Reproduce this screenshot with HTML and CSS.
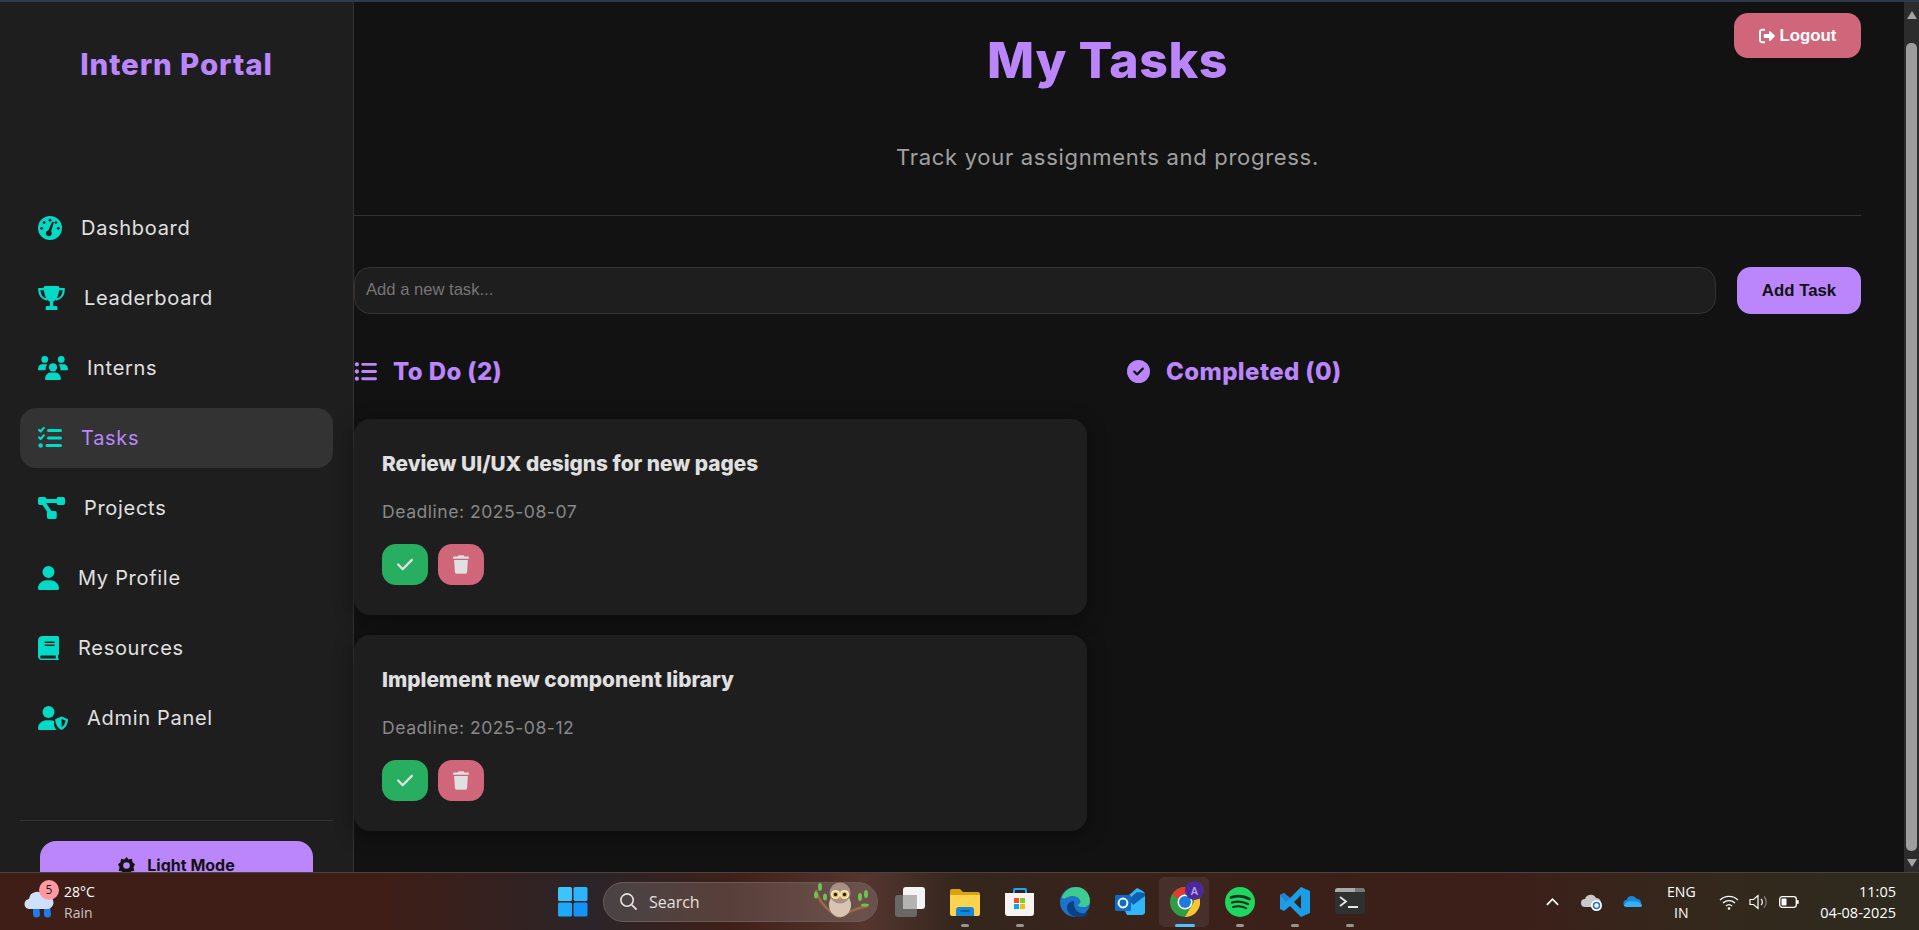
FILE: index.html
```html
<!DOCTYPE html>
<html lang="en">
<head>
    <meta charset="UTF-8">
    <meta name="viewport" content="width=device-width, initial-scale=1.0">
    <title>My Tasks - Intern Portal</title>
    <link rel="stylesheet" href="styles.css">
</head>
<body>
    <div class="top-strip"></div>

    <div class="app">
        <aside class="sidebar">
            <h2 class="brand">Intern Portal</h2>

            <nav class="nav">
                <a href="#" class="nav-item">
                    <svg class="ico w24" viewBox="0 0 512 512"><circle cx="256" cy="256" r="256" fill="currentColor"/><g fill="#1e1e1e"><circle cx="256" cy="88" r="30"/><circle cx="130" cy="140" r="30"/><circle cx="78" cy="262" r="30"/><circle cx="434" cy="262" r="30"/><circle cx="382" cy="140" r="30"/><circle cx="230" cy="370" r="62"/><path d="M206 340 L300 130 Q316 112 330 128 Q340 140 334 156 L266 372 Z"/></g></svg>
                    <span>Dashboard</span>
                </a>
                <a href="#" class="nav-item">
                    <svg class="ico w27" viewBox="0 0 576 512"><path fill="none" stroke="currentColor" stroke-width="48" d="M130 64H28c-6 120 60 210 170 226M446 64h102c6 120-60 210-170 226"/><path fill="currentColor" d="M150 0h276c16 0 28 12 28 30 0 150-60 270-130 306v88h64c14 0 26 12 26 26v62H164v-62c0-14 12-26 26-26h64v-88C184 300 122 180 122 30 122 12 134 0 150 0z"/></svg>
                    <span>Leaderboard</span>
                </a>
                <a href="#" class="nav-item">
                    <svg class="ico w30" viewBox="0 0 640 512"><g fill="currentColor"><circle cx="144" cy="72" r="72"/><circle cx="496" cy="72" r="72"/><circle cx="320" cy="240" r="88"/><path d="M80 176h96c6 0 16 1 22 4-22 26-36 60-36 96 0 10 1 20 3 30H20c-11 0-20-9-20-20 0-60 36-110 80-110zM464 176h96c44 0 80 50 80 110 0 11-9 20-20 20H475c2-10 3-20 3-30 0-36-14-70-36-96 6-3 16-4 22-4zM268 352h104c66 0 116 70 116 136 0 14-10 24-24 24H176c-14 0-24-10-24-24 0-66 50-136 116-136z"/></g></svg>
                    <span>Interns</span>
                </a>
                <a href="#" class="nav-item active">
                    <svg class="ico w24" viewBox="0 0 512 512"><g fill="currentColor"><path fill="none" stroke="currentColor" stroke-width="48" stroke-linecap="round" stroke-linejoin="round" d="M24 84l32 32 66-76M24 244l32 32 66-76"/><circle cx="56" cy="416" r="48"/><rect x="192" y="64" width="320" height="64" rx="32"/><rect x="192" y="224" width="320" height="64" rx="32"/><rect x="160" y="384" width="352" height="64" rx="32"/></g></svg>
                    <span>Tasks</span>
                </a>
                <a href="#" class="nav-item">
                    <svg class="ico w27" viewBox="0 0 576 512"><g fill="currentColor"><path fill="none" stroke="currentColor" stroke-width="84" d="M90 105h400M90 105l190 280"/><rect x="0" y="20" width="180" height="170" rx="40"/><rect x="396" y="20" width="180" height="170" rx="40"/><rect x="190" y="320" width="210" height="170" rx="40"/></g></svg>
                    <span>Projects</span>
                </a>
                <a href="#" class="nav-item">
                    <svg class="ico w21" viewBox="0 0 448 512"><path fill="currentColor" d="M224 256A128 128 0 1 0 224 0a128 128 0 1 0 0 256zm-45.7 48C79.8 304 0 383.8 0 482.3C0 498.7 13.3 512 29.7 512H418.3c16.4 0 29.7-13.3 29.7-29.7C448 383.8 368.2 304 269.7 304H178.3z"/></svg>
                    <span>My Profile</span>
                </a>
                <a href="#" class="nav-item">
                    <svg class="ico w21" viewBox="0 0 448 512"><path fill="currentColor" d="M96 0H416c18 0 32 14 32 32V384c0 14-8 24-20 30v66h4c9 0 16 7 16 16s-7 16-16 16H80c-44 0-80-36-80-80V96C0 43 43 0 96 0zM80 416c-18 0-32 7-32 32s14 32 32 32H380v-64H80z"/><rect x="144" y="118" width="210" height="32" fill="#1e1e1e"/><rect x="144" y="182" width="210" height="32" fill="#1e1e1e"/></svg>
                    <span>Resources</span>
                </a>
                <a href="#" class="nav-item">
                    <svg class="ico w30" viewBox="0 0 640 512"><g fill="currentColor"><circle cx="224" cy="128" r="128"/><path d="M178 304h92c26 0 50 5 72 15v65c0 50 20 92 58 128H30c-17 0-30-13-30-30 0-98 80-178 178-178z"/><path fill-rule="evenodd" d="M504 224l128 52c5 2 8 7 8 12 0 70-30 170-136 224-106-54-136-154-136-224 0-5 3-10 8-12zm0 54v174c58-36 80-100 84-142z"/></g></svg>
                    <span>Admin Panel</span>
                </a>
            </nav>

            <div class="sidebar-footer">
                <button class="theme-btn">
                    <svg class="theme-ico" viewBox="0 0 512 512"><path fill="currentColor" fill-rule="evenodd" d="M256 0l64 76 100-20 16 100 76 64-46 92 26 100-100 24-46 76-90-40-90 40-46-76L20 412l26-100L0 220l76-64 16-100 100 20zM256 156a100 100 0 1 0 0 200 100 100 0 1 0 0-200z"/></svg>
                    Light Mode
                </button>
            </div>
        </aside>

        <main class="content">
            <button class="logout-btn">
                <svg class="logout-ico" viewBox="0 0 512 512"><path fill="currentColor" d="M502 273L362 412c-14 14-42 6-42-17v-75H176c-14 0-24-10-24-24v-80c0-14 10-24 24-24h144v-75c0-23 28-31 42-17l140 139c10 10 10 24 0 34zM192 436v40c0 7-5 12-12 12H96c-53 0-96-43-96-96V120c0-53 43-96 96-96h84c7 0 12 5 12 12v40c0 7-5 12-12 12H96c-18 0-32 14-32 32v272c0 18 14 32 32 32h84c7 0 12 5 12 12z"/></svg>
                Logout
            </button>

            <header class="page-head">
                <h1>My Tasks</h1>
                <p>Track your assignments and progress.</p>
            </header>

            <form class="task-form">
                <input type="text" placeholder="Add a new task...">
                <button type="button" class="add-btn">Add Task</button>
            </form>

            <div class="columns">
                <section class="column">
                    <h3 class="col-title">
                        <svg class="col-ico" viewBox="0 0 512 512"><path fill="currentColor" d="M64 144a48 48 0 1 0 0-96 48 48 0 1 0 0 96zM192 64c-17.7 0-32 14.3-32 32s14.3 32 32 32H480c17.7 0 32-14.3 32-32s-14.3-32-32-32H192zm0 160c-17.7 0-32 14.3-32 32s14.3 32 32 32H480c17.7 0 32-14.3 32-32s-14.3-32-32-32H192zm0 160c-17.7 0-32 14.3-32 32s14.3 32 32 32H480c17.7 0 32-14.3 32-32s-14.3-32-32-32H192zM64 304a48 48 0 1 0 0-96 48 48 0 1 0 0 96zm48 112a48 48 0 1 0-96 0 48 48 0 1 0 96 0z"/></svg>
                        To Do (2)
                    </h3>

                    <div class="task-card">
                        <h4>Review UI/UX designs for new pages</h4>
                        <p>Deadline: 2025-08-07</p>
                        <div class="task-actions">
                            <button class="done-btn"><svg viewBox="0 0 448 512"><path fill="currentColor" d="M438.6 105.4c12.5 12.5 12.5 32.8 0 45.3l-256 256c-12.5 12.5-32.8 12.5-45.3 0l-128-128c-12.5-12.5-12.5-32.8 0-45.3s32.8-12.5 45.3 0L160 338.7 393.4 105.4c12.5-12.5 32.8-12.5 45.3 0z"/></svg></button>
                            <button class="del-btn"><svg viewBox="0 0 448 512"><path fill="currentColor" d="M135.2 17.7L128 32H32C14.3 32 0 46.3 0 64S14.3 96 32 96H416c17.7 0 32-14.3 32-32s-14.3-32-32-32H320l-7.2-14.3C307.4 6.8 296.3 0 284.2 0H163.8c-12.1 0-23.2 6.8-28.6 17.7zM416 128H32L53.2 467c1.6 25.3 22.6 45 47.9 45H346.9c25.3 0 46.3-19.7 47.9-45L416 128z"/></svg></button>
                        </div>
                    </div>

                    <div class="task-card">
                        <h4>Implement new component library</h4>
                        <p>Deadline: 2025-08-12</p>
                        <div class="task-actions">
                            <button class="done-btn"><svg viewBox="0 0 448 512"><path fill="currentColor" d="M438.6 105.4c12.5 12.5 12.5 32.8 0 45.3l-256 256c-12.5 12.5-32.8 12.5-45.3 0l-128-128c-12.5-12.5-12.5-32.8 0-45.3s32.8-12.5 45.3 0L160 338.7 393.4 105.4c12.5-12.5 32.8-12.5 45.3 0z"/></svg></button>
                            <button class="del-btn"><svg viewBox="0 0 448 512"><path fill="currentColor" d="M135.2 17.7L128 32H32C14.3 32 0 46.3 0 64S14.3 96 32 96H416c17.7 0 32-14.3 32-32s-14.3-32-32-32H320l-7.2-14.3C307.4 6.8 296.3 0 284.2 0H163.8c-12.1 0-23.2 6.8-28.6 17.7zM416 128H32L53.2 467c1.6 25.3 22.6 45 47.9 45H346.9c25.3 0 46.3-19.7 47.9-45L416 128z"/></svg></button>
                        </div>
                    </div>
                </section>

                <section class="column">
                    <h3 class="col-title">
                        <svg class="col-ico" viewBox="0 0 512 512"><path fill="currentColor" d="M256 512A256 256 0 1 0 256 0a256 256 0 1 0 0 512zM369 209L241 337c-9.4 9.4-24.6 9.4-33.9 0l-64-64c-9.4-9.4-9.4-24.6 0-33.9s24.6-9.4 33.9 0l47 47L335 175c9.4-9.4 24.6-9.4 33.9 0s9.4 24.6 0 33.9z"/></svg>
                        Completed (0)
                    </h3>
                </section>
            </div>
        </main>

        <div class="scrollbar">
            <span class="arrow-up"></span>
            <span class="thumb"></span>
            <span class="arrow-down"></span>
        </div>
    </div>

    <footer class="taskbar">
        <div class="weather">
            <svg class="weather-ico" viewBox="0 0 32 32">
                <path fill="#1f7bf0" d="M9 18h6l1 9a3.500 3.500 0 0 1-7 0zM20 18h6l1 9a3.500 3.500 0 0 1-7 0z"/>
                <path fill="#cfe0fa" d="M6 22a5 5 0 0 1-1-10 8 8 0 0 1 15-3 6 6 0 0 1 5 13z"/>
            </svg>
            <span class="weather-badge">5</span>
            <div class="weather-text">
                <span>28°C</span>
                <span class="dim">Rain</span>
            </div>
        </div>

        <div class="tb-cell">
            <svg class="tb-ico" viewBox="0 0 30 30"><g fill="#3cc4fb"><rect width="14" height="14" rx="1.500"/><rect x="15.500" width="14" height="14" rx="1.500" fill="#2db4fa"/><rect y="15.500" width="14" height="14" rx="1.500" fill="#1fa8f8"/><rect x="15.500" y="15.500" width="14" height="14" rx="1.500" fill="#1293f5"/></g></svg>
        </div>

        <div class="tb-search">
            <svg class="search-ico" viewBox="0 0 20 20"><circle cx="8.500" cy="8.500" r="6.500" fill="none" stroke="#e4e0de" stroke-width="1.700"/><path d="M13.500 13.500L18.500 18.500" stroke="#e4e0de" stroke-width="1.900"/></svg>
            <span>Search</span>
            <svg class="owl" viewBox="0 0 56 40">
                <path d="M3 8c3 12 10 20 23 27M55 24c-10 1-19 6-29 11" stroke="#9a6a45" stroke-width="2.600" fill="none"/>
                <g fill="#6fc24f"><ellipse cx="7" cy="5" rx="2" ry="4"/><ellipse cx="3" cy="13" rx="2" ry="3.500"/><ellipse cx="12" cy="15" rx="2" ry="3.500"/><ellipse cx="47" cy="15" rx="2" ry="4"/><ellipse cx="53" cy="12" rx="2" ry="4"/><ellipse cx="52" cy="23" rx="4" ry="1.500"/></g>
                <ellipse cx="27" cy="23" rx="11" ry="12" fill="#d8c4b0"/>
                <circle cx="27" cy="11" r="10.500" fill="#a98f85"/>
                <circle cx="22.500" cy="12.500" r="4.600" fill="#f5ecd4"/><circle cx="31.500" cy="12.500" r="4.600" fill="#f5ecd4"/>
                <circle cx="22.500" cy="12.500" r="3" fill="#e6c13c"/><circle cx="31.500" cy="12.500" r="3" fill="#e6c13c"/>
                <circle cx="22.500" cy="12.500" r="1.700" fill="#231a12"/><circle cx="31.500" cy="12.500" r="1.700" fill="#231a12"/>
                <path d="M25.500 15l1.500 3 1.500-3z" fill="#e0a83a"/>
            </svg>
        </div>

        <div class="tb-cell">
            <svg class="tb-ico" viewBox="0 0 30 30"><rect x="0" y="8" width="22" height="22" rx="3" fill="#6a6866"/><rect x="8" y="0" width="22" height="22" rx="3" fill="#f4f4f4"/><rect x="8" y="8" width="14" height="14" fill="#b5b3b2"/></svg>
        </div>
        <div class="tb-cell has-dot">
            <svg class="tb-ico" viewBox="0 0 30 30"><path d="M0 4a2 2 0 0 1 2-2h8l3 3h15a2 2 0 0 1 2 2v3H0z" fill="#d9a30f"/><path d="M0 8h30v19a2 2 0 0 1-2 2H2a2 2 0 0 1-2-2z" fill="#fdd34d"/><path d="M6 29v-6a3 3 0 0 1 3-3h12a3 3 0 0 1 3 3v6z" fill="#1586d8"/><rect x="10" y="23" width="10" height="2" rx="1" fill="#0b5fa8"/></svg>
            <i class="dot"></i>
        </div>
        <div class="tb-cell has-dot">
            <svg class="tb-ico" viewBox="0 0 30 30"><path d="M9 7V3a1 1 0 0 1 1-1h10a1 1 0 0 1 1 1v4" fill="none" stroke="#1ea7f2" stroke-width="2"/><path d="M0 6h29v20a3 3 0 0 1-3 3H3a3 3 0 0 1-3-3z" fill="#f7f5f3"/><rect x="9" y="11" width="5" height="5" fill="#f1511b"/><rect x="15" y="11" width="5" height="5" fill="#80cc28"/><rect x="9" y="17" width="5" height="5" fill="#00adef"/><rect x="15" y="17" width="5" height="5" fill="#fbbc09"/></svg>
            <i class="dot"></i>
        </div>
        <div class="tb-cell">
            <svg class="tb-ico" viewBox="0 0 30 30"><circle cx="15" cy="15" r="15" fill="#1b74c9"/><path d="M2 10C5 3 11 0 16 0c8 0 14 6 14 14 0 4-3 6-7 6-3 0-5-1-5-2 2-1 3-3 2-5-2-4-8-5-12-3-3 1-5 3-6 0z" fill="#3ecb8f"/><path d="M14 14c-4 0-7 3-7 7 0 4 4 8 9 9 6 1 11-1 13-5-4 2-9 2-12-1-3-3-3-7-3-10z" fill="#0c3f86"/></svg>
        </div>
        <div class="tb-cell">
            <svg class="tb-ico" viewBox="0 0 30 30"><path d="M14 8l8-7c3 1 6 3 8 5v20a4 4 0 0 1-3 2H12L9 22z" fill="#33b6f5"/><path d="M14 12l8-7 8 1v3L18 18z" fill="#0f5fb0"/><rect x="0" y="8" width="16" height="16" rx="1.500" fill="#0f6cc4"/><circle cx="8" cy="16" r="4.400" fill="none" stroke="#fff" stroke-width="2"/></svg>
        </div>
        <div class="tb-cell active">
            <svg class="tb-ico" viewBox="0 0 30 30"><circle cx="15" cy="15" r="15" fill="#2f9e44"/><path d="M15 0a15 15 0 0 1 13 7.500H15a7.500 7.500 0 0 0-7 5L2.500 7A15 15 0 0 1 15 0z" fill="#e33b2e"/><path d="M28 7.500A15 15 0 0 1 15 30l6.500-11a7.500 7.500 0 0 0 0-11.500z" fill="#fbc531"/><circle cx="15" cy="15" r="7.500" fill="#fff"/><circle cx="15" cy="15" r="6" fill="#1f7ae0"/></svg>
            <span class="profile-badge">A</span>
            <i class="active-bar"></i>
        </div>
        <div class="tb-cell has-dot">
            <svg class="tb-ico" viewBox="0 0 30 30"><circle cx="15" cy="15" r="15" fill="#1ed760"/><g fill="none" stroke="#14311f" stroke-linecap="round"><path d="M6 10.500c6-2 13-1.500 18.500 1.500" stroke-width="2.800"/><path d="M7 15.500c5-1.500 11-1 16 1.500" stroke-width="2.300"/><path d="M8 20c4-1 9-1 13 1.200" stroke-width="1.900"/></g></svg>
            <i class="dot"></i>
        </div>
        <div class="tb-cell has-dot">
            <svg class="tb-ico" viewBox="0 0 30 30"><path d="M21 0l9 4v22l-9 4-11-11-6 5-4-2v-14l4-2 6 5zM21 8l-7 7 7 7z" fill="#1b9de8" fill-rule="evenodd"/><path d="M21 0l-11 11-6-5-4 2 6 7 15-15z" fill="#2a7fd0"/></svg>
            <i class="dot"></i>
        </div>
        <div class="tb-cell has-dot">
            <svg class="tb-ico" viewBox="0 0 30 30"><rect y="1" width="30" height="26" rx="2.500" fill="#2f3030"/><path d="M0 3.500A2.500 2.500 0 0 1 2.500 1H20v4H0z" fill="#a9a9a9"/><path d="M20 1h7.500A2.500 2.500 0 0 1 30 3.500V5H20z" fill="#777"/><path d="M5 10l6 4.500-6 4.500" fill="none" stroke="#e6e6e6" stroke-width="1.800"/><rect x="13" y="19" width="10" height="2" fill="#e6e6e6"/></svg>
            <i class="dot"></i>
        </div>

        <div class="tray">
            <svg class="tray-ico chev" viewBox="0 0 16 10"><path d="M2 8l6-6 6 6" fill="none" stroke="#fff" stroke-width="1.800"/></svg>
            <svg class="tray-ico cloud" viewBox="0 0 22 20"><path d="M4 15a4 4 0 0 1 0-8 6 6 0 0 1 11-1 5 5 0 0 1 3 9z" fill="#c9c9c9"/><circle cx="15.500" cy="13.500" r="5.500" fill="#fff"/><circle cx="15.500" cy="13.500" r="3" fill="none" stroke="#1b78d0" stroke-width="1.500"/></svg>
            <svg class="tray-ico drive" viewBox="0 0 22 14"><path d="M5 13a4 4 0 0 1-1-8 6 6 0 0 1 11-1 5 5 0 0 1 3 9z" fill="#1a86dc"/><path d="M1 11c2-3 5-5 9-4 4-1 9 1 11 4 0 1-1 2-3 2H5c-2 0-4-1-4-2z" fill="#36b0f5"/></svg>
            <div class="lang"><span>ENG</span><span>IN</span></div>
            <svg class="tray-ico wifi" viewBox="0 0 20 16"><g fill="none" stroke="#fff" stroke-width="1.300"><path d="M1 6a13 13 0 0 1 18 0"/><path d="M4 9a9 9 0 0 1 12 0"/><path d="M7 12a4.500 4.500 0 0 1 6 0"/></g><circle cx="10" cy="14.500" r="1.300" fill="#fff"/></svg>
            <svg class="tray-ico vol" viewBox="0 0 20 16"><path d="M1 5.500h3.500L9 1.500v13l-4.500-4H1z" fill="none" stroke="#fff" stroke-width="1.200"/><path d="M12 5a4 4 0 0 1 0 6" fill="none" stroke="#fff" stroke-width="1.200"/><path d="M15 2.500a8 8 0 0 1 0 11" fill="none" stroke="#8a7f78" stroke-width="1.200"/></svg>
            <svg class="tray-ico batt" viewBox="0 0 20 12"><rect x=".7" y=".7" width="16.600" height="10.600" rx="2.500" fill="none" stroke="#fff" stroke-width="1.300"/><rect x="2.500" y="2.500" width="5" height="7" rx="1" fill="#fff"/><rect x="18" y="4" width="1.700" height="4" rx=".8" fill="#fff"/></svg>
            <div class="clock"><span>11:05</span><span>04-08-2025</span></div>
        </div>
    </footer>
</body>
</html>
```

FILE: styles.css
```css
* {
    box-sizing: border-box;
}

body {
    margin: 0;
    height: 930px;
    overflow: hidden;
    background-color: #121212;
    font-family: "Inter", "Liberation Sans", sans-serif;
    display: flex;
    flex-direction: column;
}

.top-strip {
    height: 2px;
    background-color: #2e3a4c;
}

.app {
    flex: 1;
    display: flex;
    min-height: 0;
}

/* sidebar */
.sidebar {
    width: 354px;
    flex-shrink: 0;
    background-color: #1e1e1e;
    border-right: 1px solid #333;
    padding: 0 20px;
    overflow: hidden;
}

.brand {
    margin: 0;
    padding-top: 44px;
    height: 196px;
    text-align: center;
    font-size: 29.5px;
    line-height: 36px;
    font-weight: 800;
    letter-spacing: 0.9px;
    color: #bb86fc;
}

.nav-item {
    display: flex;
    align-items: center;
    gap: 19px;
    height: 60px;
    margin-bottom: 10px;
    padding-left: 18px;
    border-radius: 16px;
    color: #e0e0e0;
    text-decoration: none;
    font-size: 20px;
    letter-spacing: 0.7px;
}

.nav-item.active {
    background-color: #333;
    color: #bb86fc;
}

.ico {
    height: 24px;
    flex-shrink: 0;
    color: #03dac6;
}

.w21 { width: 21px; }
.w24 { width: 24px; }
.w27 { width: 27px; }
.w30 { width: 30px; }

.sidebar-footer {
    margin-top: 72px;
    padding: 20px 20px 0;
    border-top: 1px solid #333;
}

.theme-btn {
    width: 100%;
    height: 48px;
    display: flex;
    align-items: center;
    justify-content: center;
    gap: 12px;
    border: none;
    border-radius: 16px;
    background-color: #bb86fc;
    color: #121212;
    font-family: "Inter", sans-serif;
    font-size: 16px;
    font-weight: 700;
}

.theme-ico {
    width: 17px;
    height: 17px;
}

/* main area */
.content {
    flex: 1;
    position: relative;
    padding-right: 43px;
    min-width: 0;
}

.logout-btn {
    position: absolute;
    top: 11px;
    right: 43px;
    width: 127px;
    height: 45px;
    display: flex;
    align-items: center;
    justify-content: center;
    gap: 5px;
    border: none;
    border-radius: 14px;
    background-color: #cf6679;
    color: #fff;
    font-family: "Liberation Sans", sans-serif;
    font-size: 16.800px;
    font-weight: 700;
}

.logout-ico {
    width: 16px;
    height: 16px;
}

.page-head {
    text-align: center;
    height: 214px;
    border-bottom: 1px solid #333;
    padding-top: 22px;
}

.page-head h1 {
    margin: 0;
    font-size: 50px;
    line-height: 72px;
    font-weight: 800;
    letter-spacing: 0.6px;
    color: #bb86fc;
}

.page-head p {
    margin: 45px 0 0;
    font-size: 22px;
    line-height: 32px;
    letter-spacing: 0.7px;
    color: #a0a0a0;
}

.task-form {
    display: flex;
    gap: 21px;
    margin-top: 51px;
}

.task-form input {
    flex: 1;
    height: 47px;
    padding: 0 11px 2px;
    border: 1px solid #333;
    border-radius: 16px;
    background-color: #1e1e1e;
    color: #e0e0e0;
    font-family: "Liberation Sans", sans-serif;
    font-size: 16.600px;
}

.task-form input::placeholder {
    color: #757575;
}

.add-btn {
    width: 124px;
    height: 47px;
    border: none;
    border-radius: 14px;
    background-color: #bb86fc;
    color: #121212;
    font-family: "Liberation Sans", sans-serif;
    font-size: 16.800px;
    font-weight: 700;
}

.columns {
    display: grid;
    grid-template-columns: 733px 1fr;
    gap: 40px;
    margin-top: 39px;
}

.col-title {
    display: flex;
    align-items: center;
    gap: 16px;
    margin: 0 0 30px;
    height: 36px;
    font-size: 24px;
    font-weight: 800;
    letter-spacing: 0.4px;
    color: #bb86fc;
}

.col-ico {
    width: 23px;
    height: 23px;
    flex-shrink: 0;
}

.task-card {
    height: 196px;
    margin-bottom: 20px;
    padding: 29px 28px 0;
    border-radius: 16px;
    background-color: #1e1e1e;
    box-shadow: 0 4px 20px rgba(0, 0, 0, 0.4);
}

.task-card h4 {
    margin: 0;
    font-size: 20.800px;
    line-height: 32px;
    font-weight: 800;
    color: #e0e0e0;
}

.task-card p {
    margin: 19px 0 0;
    font-size: 17.600px;
    line-height: 26px;
    letter-spacing: 0.5px;
    color: #888;
}

.task-actions {
    display: flex;
    gap: 10px;
    margin-top: 19px;
}

.task-actions button {
    width: 46px;
    height: 41px;
    display: flex;
    align-items: center;
    justify-content: center;
    border: none;
    border-radius: 14px;
    color: #e0e0e0;
}

.task-actions svg {
    width: 16px;
    height: 19px;
}

.done-btn {
    background-color: #27ae60;
}

.del-btn {
    background-color: #cf6679;
}

/* fake browser scrollbar */
.scrollbar {
    width: 15px;
    flex-shrink: 0;
    background-color: #2c2c2c;
    display: flex;
    flex-direction: column;
    align-items: center;
    padding: 9px 0 5px;
}

.arrow-up {
    width: 0;
    height: 0;
    border-left: 5px solid transparent;
    border-right: 5px solid transparent;
    border-bottom: 8px solid #a3a3a3;
}

.arrow-down {
    width: 0;
    height: 0;
    border-left: 5px solid transparent;
    border-right: 5px solid transparent;
    border-top: 8px solid #a3a3a3;
}

.thumb {
    flex: 1;
    width: 11px;
    margin: 24px 0 8px;
    border-radius: 5px;
    background-color: #9e9e9e;
}

/* windows taskbar */
.taskbar {
    height: 58px;
    flex-shrink: 0;
    display: flex;
    align-items: center;
    border-top: 1px solid #4a4240;
    background: linear-gradient(90deg, #3f1e17 0%, #3f1e17 20%, #2b2428 31%, #3e2019 38%, #55362f 45%, #33261d 50%, #3a2119 62%, #3c1f18 78%, #33291c 90%, #2e2a1f 100%);
    color: #fff;
    font-family: "Open Sans", "Noto Sans", sans-serif;
    font-size: 12px;
}

.weather {
    width: 545px;
    flex-shrink: 0;
    position: relative;
    display: flex;
    align-items: center;
    padding-left: 24px;
    gap: 8px;
}

.weather-ico {
    width: 32px;
    height: 32px;
    margin-top: 2px;
}

.weather-badge {
    position: absolute;
    left: 39px;
    top: -1px;
    width: 20px;
    height: 20px;
    border-radius: 50%;
    background-color: #ff9aa2;
    color: #1b1b1b;
    font-size: 12px;
    line-height: 20px;
    text-align: center;
}

.weather-text {
    display: flex;
    flex-direction: column;
    line-height: 21px;
    font-size: 14px;
}

.dim {
    color: #c9c4c0;
}

.tb-cell {
    width: 55px;
    height: 50px;
    flex-shrink: 0;
    position: relative;
    display: flex;
    align-items: center;
    justify-content: center;
}

.tb-ico {
    width: 30px;
    height: 30px;
}

.tb-search {
    width: 275px;
    height: 40px;
    flex-shrink: 0;
    margin: 0 4px 0 3px;
    display: flex;
    align-items: center;
    padding-left: 15px;
    gap: 11px;
    border: 1px solid #6a5a55;
    border-radius: 20px;
    background-color: rgba(255, 255, 255, 0.14);
    color: #e4e0de;
    font-size: 16px;
}

.search-ico {
    width: 19px;
    height: 19px;
}

.owl {
    width: 56px;
    height: 40px;
    margin-left: auto;
    margin-right: 8px;
}

.dot {
    position: absolute;
    left: 24px;
    bottom: 0;
    width: 8px;
    height: 3px;
    border-radius: 2px;
    background-color: #9a9490;
}

.tb-cell.active::before {
    content: "";
    position: absolute;
    left: 2px;
    right: 3px;
    top: 0;
    bottom: 0;
    border-radius: 5px;
    background-color: rgba(255, 255, 255, 0.07);
}

.tb-cell.active .tb-ico {
    position: relative;
}

.active-bar {
    position: absolute;
    left: 18px;
    bottom: 0;
    width: 20px;
    height: 3px;
    border-radius: 2px;
    background-color: #4cc2ff;
}

.profile-badge {
    position: absolute;
    left: 28px;
    top: 4px;
    width: 19px;
    height: 19px;
    border-radius: 50%;
    background-color: #4a2a9a;
    color: #b9a6f0;
    font-size: 11px;
    font-weight: 600;
    line-height: 19px;
    text-align: center;
}

.tray {
    margin-left: auto;
    display: flex;
    align-items: center;
    padding-right: 23px;
}

.tray-ico {
    flex-shrink: 0;
}

.chev { width: 15px; height: 10px; margin-right: 21px; }
.cloud { width: 22px; height: 20px; margin-right: 20px; }
.drive { width: 20px; height: 13px; margin-right: 22px; }
.wifi { width: 20px; height: 16px; margin-right: 10px; }
.vol { width: 20px; height: 16px; margin-right: 10px; }
.batt { width: 20px; height: 12px; margin-right: 21px; }

.lang {
    display: flex;
    flex-direction: column;
    align-items: center;
    width: 32px;
    margin-right: 22px;
    font-size: 14px;
    line-height: 21px;
}

.clock {
    display: flex;
    flex-direction: column;
    align-items: flex-end;
    font-size: 14.500px;
    line-height: 21px;
}
```
